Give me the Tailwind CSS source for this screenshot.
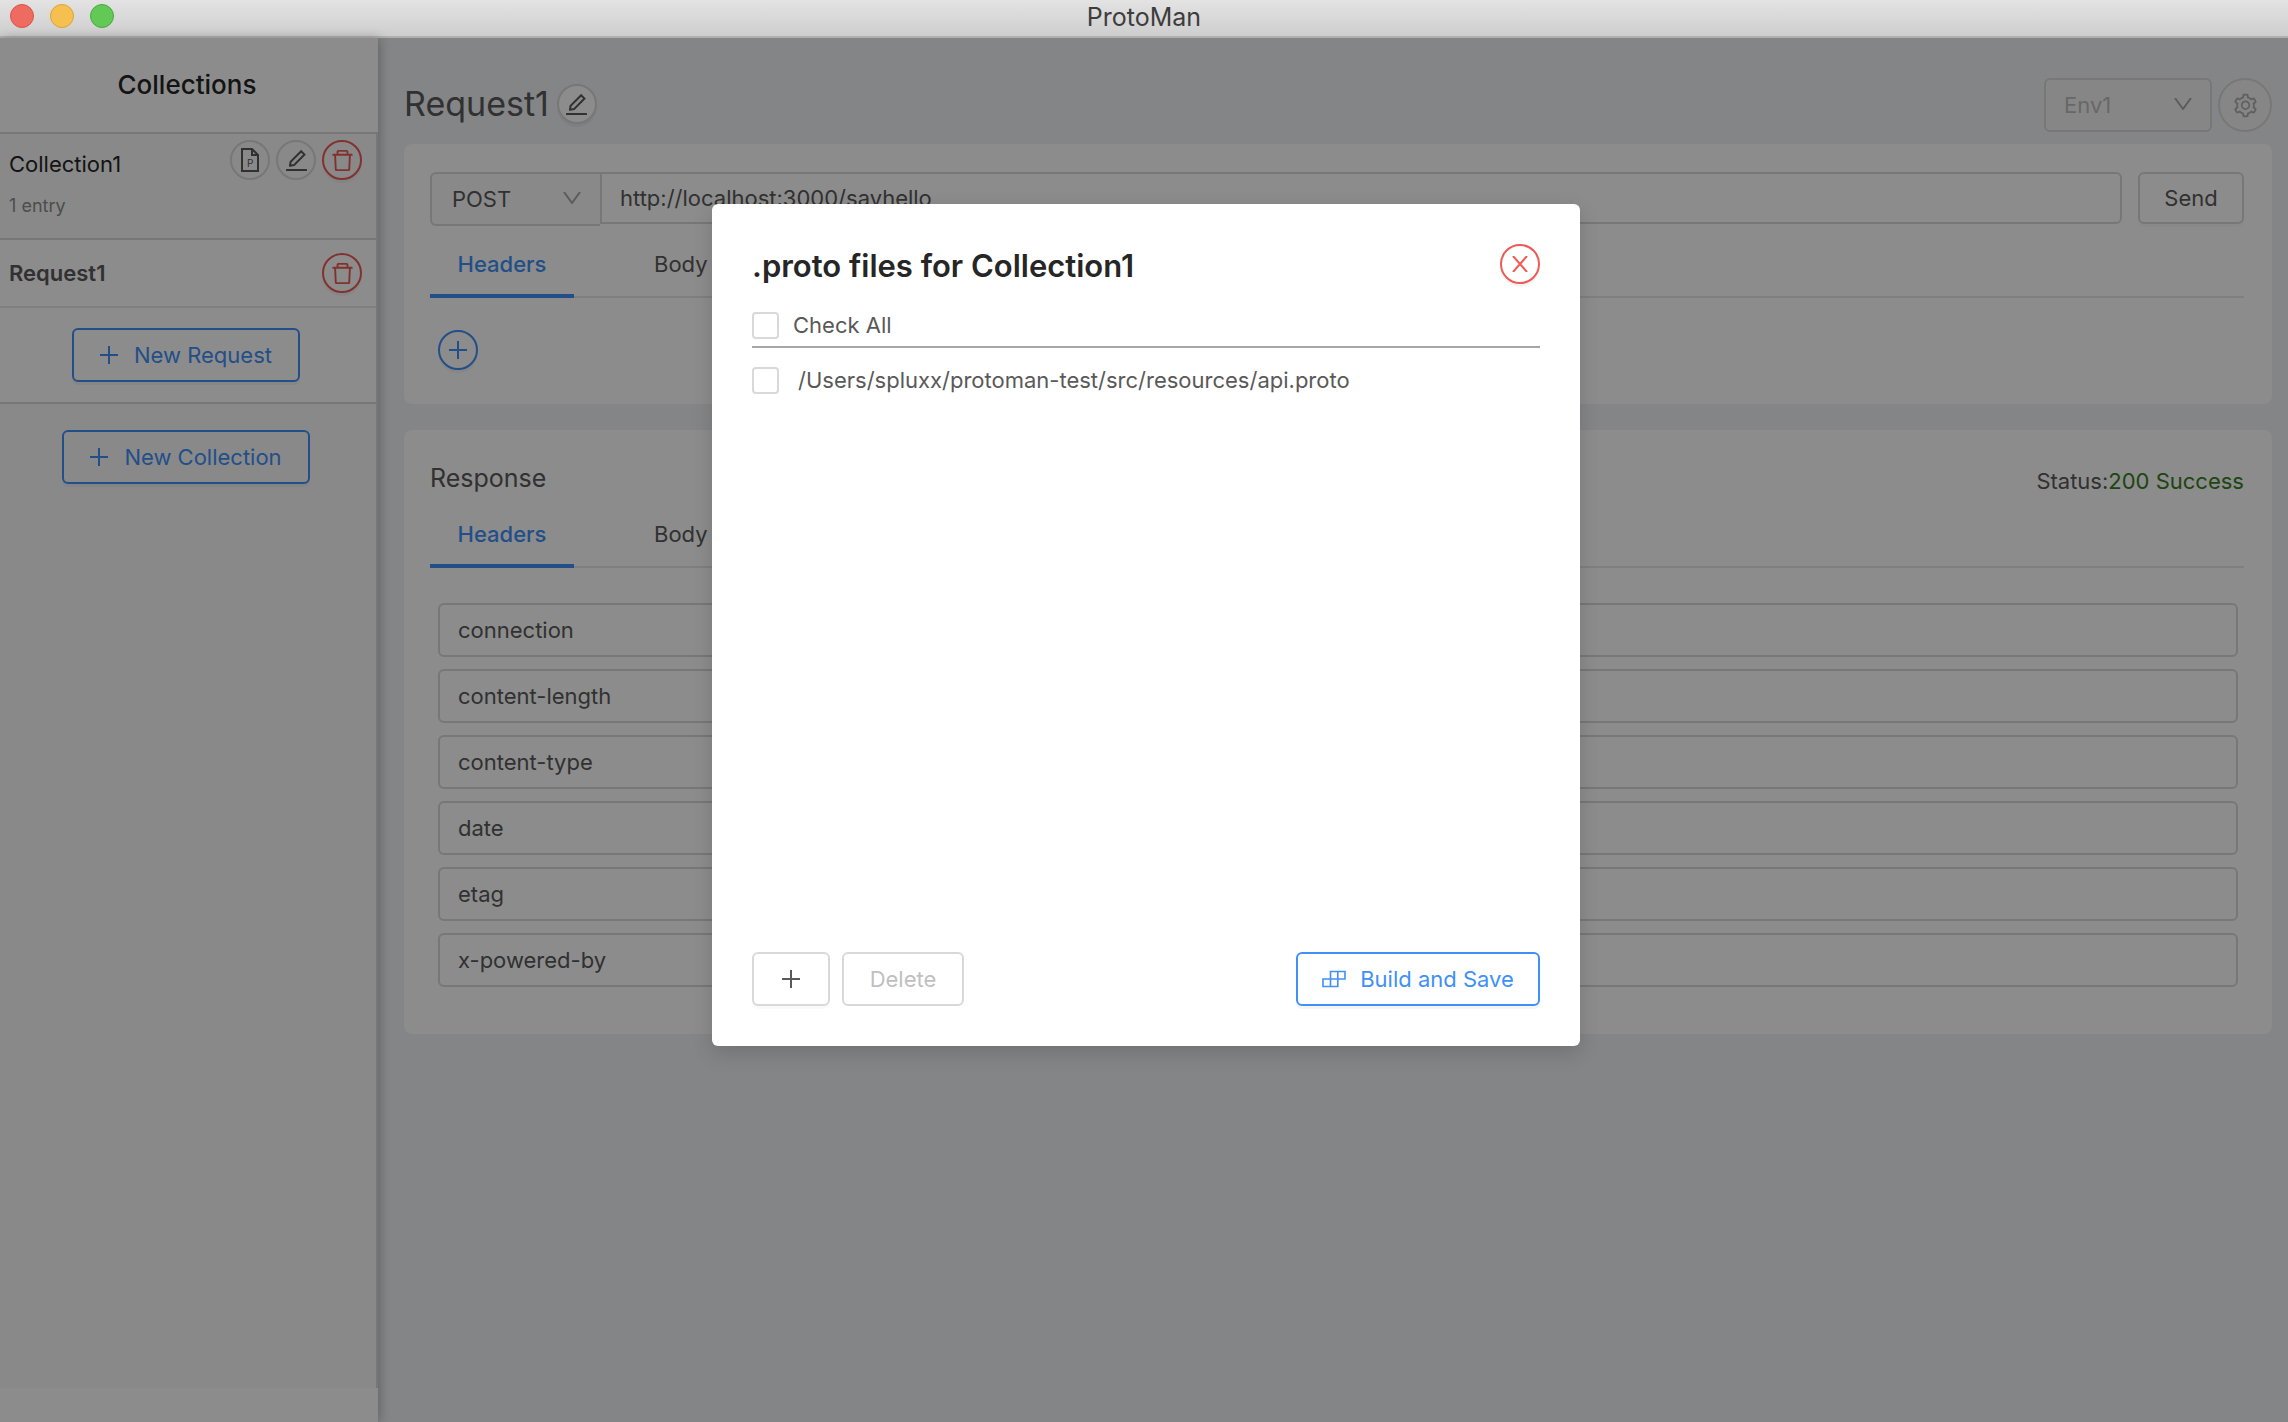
<!DOCTYPE html>
<html lang="en">
<head>
<meta charset="utf-8">
<title>ProtoMan</title>
<script src="https://cdn.jsdelivr.net/npm/@tailwindcss/browser@4"></script>
</head>
<body class="flex h-screen flex-col overflow-hidden bg-[#f0f2f5] font-['Inter',sans-serif] text-[22px] leading-[36px] text-[#595959]">
<svg class="hidden">
  <symbol id="edit" viewBox="0 0 1024 1024"><path fill="currentColor" d="M257.700 752c2 0 4-.2 6-.5L431.900 722c2-.4 3.900-1.300 5.300-2.800l423.900-423.900a9.960 9.960 0 0 0 0-14.100L694.900 114.900c-1.900-1.900-4.400-2.900-7.100-2.900s-5.200 1-7.100 2.900L256.800 538.800c-1.500 1.500-2.400 3.300-2.800 5.300l-29.500 168.200a33.500 33.500 0 0 0 9.400 29.800c6.600 6.400 14.900 9.900 23.800 9.900zm67.400-174.400L687.800 215l73.300 73.300-362.700 362.600-88.900 15.700 15.600-89zM880 836H144c-17.700 0-32 14.300-32 32v36c0 4.400 3.600 8 8 8h784c4.400 0 8-3.600 8-8v-36c0-17.700-14.300-32-32-32z"/></symbol>
  <symbol id="trash" viewBox="0 0 1024 1024"><path fill="currentColor" d="M360 184h-8c4.400 0 8-3.600 8-8v8h304v-8c0 4.400 3.600 8 8 8h-8v72h72v-80c0-35.300-28.700-64-64-64H352c-35.300 0-64 28.700-64 64v80h72v-72zm504 72H160c-17.700 0-32 14.300-32 32v32c0 4.400 3.600 8 8 8h60.400l24.700 523c1.600 34.100 29.800 61 63.900 61h454c34.200 0 62.300-26.800 63.900-61l24.700-523H888c4.400 0 8-3.600 8-8v-32c0-17.700-14.300-32-32-32zM731.300 840H292.700l-24.200-512h487l-24.200 512z"/></symbol>
  <symbol id="gear" viewBox="0 0 1024 1024"><path fill="currentColor" d="M924.8 625.7l-65.5-56c3.1-19 4.7-38.4 4.7-57.8s-1.6-38.8-4.7-57.8l65.5-56a32.03 32.03 0 0 0 9.3-35.2l-.9-2.6a443.74 443.74 0 0 0-79.7-137.9l-1.8-2.1a32.12 32.12 0 0 0-35.1-9.5l-81.3 28.9c-30-24.6-63.5-44-99.7-57.6l-15.7-85a32.05 32.05 0 0 0-25.8-25.7l-2.7-.5c-52.1-9.4-106.9-9.4-159 0l-2.7.5a32.05 32.05 0 0 0-25.8 25.7l-15.8 85.4a351.86 351.86 0 0 0-99 57.4l-81.9-29.1a32 32 0 0 0-35.1 9.5l-1.8 2.1a446.02 446.02 0 0 0-79.7 137.9l-.9 2.6c-4.5 12.5-.8 26.5 9.3 35.2l66.3 56.6c-3.1 18.8-4.6 38-4.6 57.1 0 19.2 1.5 38.4 4.6 57.1L99 625.500a32.030 32.030 0 0 0-9.300 35.200l.9 2.600c18.100 50.400 44.900 96.900 79.700 137.900l1.800 2.100a32.120 32.120 0 0 0 35.100 9.500l81.900-29.100c29.800 24.500 63.100 43.900 99 57.400l15.800 85.400a32.050 32.050 0 0 0 25.800 25.700l2.700.5a449.400 449.400 0 0 0 159 0l2.700-.5a32.050 32.050 0 0 0 25.800-25.700l15.700-85a350 350 0 0 0 99.700-57.600l81.300 28.900a32 32 0 0 0 35.100-9.500l1.800-2.100c34.800-41.100 61.600-87.500 79.700-137.900l.9-2.600c4.500-12.300.8-26.300-9.300-35zM788.300 465.900c2.500 15.100 3.800 30.600 3.800 46.100s-1.300 31-3.800 46.100l-6.600 40.100 74.700 63.900a370.030 370.030 0 0 1-42.600 73.600L721 702.800l-31.400 25.800c-23.900 19.600-50.500 35-79.300 45.800l-38.100 14.300-17.900 97a377.500 377.500 0 0 1-85 0l-17.900-97.200-37.800-14.500c-28.500-10.800-55-26.200-78.700-45.700l-31.400-25.900-93.400 33.200c-17-22.900-31.200-47.600-42.600-73.600l75.500-64.500-6.500-40c-2.400-14.900-3.700-30.300-3.700-45.500 0-15.300 1.200-30.600 3.700-45.500l6.500-40-75.500-64.500c11.300-26.100 25.600-50.700 42.600-73.600l93.400 33.200 31.400-25.900c23.700-19.500 50.200-34.900 78.700-45.700l37.900-14.300 17.900-97.200c28.100-3.200 56.800-3.200 85 0l17.900 97 38.100 14.300c28.700 10.800 55.400 26.200 79.300 45.800l31.400 25.800 92.800-32.900c17 22.900 31.200 47.600 42.600 73.600L781.800 426l6.500 39.900zM512 326c-97.200 0-176 78.800-176 176s78.800 176 176 176 176-78.800 176-176-78.800-176-176-176zm79.200 255.200A111.600 111.600 0 0 1 512 614c-29.900 0-58-11.700-79.200-32.800A111.600 111.600 0 0 1 400 502c0-29.900 11.700-58 32.800-79.200C454 401.600 482.100 390 512 390c29.900 0 58 11.600 79.200 32.800A111.600 111.600 0 0 1 624 502c0 29.900-11.700 58-32.800 79.200z"/></symbol>
  <symbol id="plus" viewBox="0 0 18 18"><path fill="none" stroke="currentColor" stroke-width="2" d="M9 0v18M0 9h18"/></symbol>
  <symbol id="down" viewBox="0 0 18 12"><path fill="none" stroke="currentColor" stroke-width="2" d="M1 0l8 11 8-11"/></symbol>
  <symbol id="cross" viewBox="0 0 16 16"><path fill="none" stroke="currentColor" stroke-width="2" d="M1 0l14 16M15 0L1 16"/></symbol>
  <symbol id="bricks" viewBox="0 0 24 18"><path fill="none" stroke="currentColor" stroke-width="1.600" d="M8.500 1.500h14.500v7.500H8.500zM15.800 1.500v7.500M1 9h14.800v7.500H1zM8.500 9v7.500"/></symbol>
  <symbol id="proto" viewBox="0 0 18 24"><path fill="none" stroke="currentColor" stroke-width="2" d="M1 1h10l6 6v16H1zM11 1v6h6"/><text x="6" y="19" font-size="10" fill="currentColor">P</text></symbol>
</svg>

<header class="relative flex h-[38px] shrink-0 items-center justify-center border-b-2 border-[#b0b0b0] bg-linear-to-b from-[#e3e3e3] to-[#cecece]">
  <div class="absolute left-[10px] top-1 flex gap-4">
    <span class="size-6 rounded-full border border-[#dc5349] bg-[#ed6b60]"></span>
    <span class="size-6 rounded-full border border-[#dba33b] bg-[#f6c050]"></span>
    <span class="size-6 rounded-full border border-[#4fa73d] bg-[#62c856]"></span>
  </div>
  <h1 class="pb-[2px] text-[25px] text-[#3d3d3d]">ProtoMan</h1>
</header>

<div class="relative flex min-h-0 flex-1">
  <aside class="z-[1] flex w-[378px] shrink-0 flex-col bg-white shadow-[2px_0_10px_rgba(0,0,0,0.25)]">
    <h2 class="flex h-[94px] shrink-0 items-center justify-center pr-1 text-[26px] font-medium text-[#262626]">Collections</h2>
    <div class="mb-[34px] flex-1 border-r-2 border-t-2 border-[#d9d9d9] bg-[#fafafa]">
      <section class="flex h-[106px] justify-between border-b-2 border-[#d9d9d9] pl-[9px] pr-[14px] pt-[6px]">
        <div class="pt-[6px]">
          <h3 class="text-[#262626]">Collection1</h3>
          <p class="pt-[6px] text-[18px] text-[#8c8c8c]">1 entry</p>
        </div>
        <div class="flex gap-[6px]">
          <button aria-label="Proto files" class="flex size-10 items-center justify-center rounded-full border-2 border-[#d9d9d9]"><svg class="h-6 w-[18px]"><use href="#proto"/></svg></button>
          <button aria-label="Rename collection" class="flex size-10 items-center justify-center rounded-full border-2 border-[#d9d9d9]"><svg class="size-[27px]"><use href="#edit"/></svg></button>
          <button aria-label="Delete collection" class="flex size-10 items-center justify-center rounded-full border-2 border-[#ec5b56] text-[#ec5b56] shadow-[0_3px_0_rgba(0,0,0,0.04)]"><svg class="size-[27px]"><use href="#trash"/></svg></button>
        </div>
      </section>
      <div class="border-b-2 border-[#d9d9d9] bg-white">
        <div class="flex h-[68px] items-center justify-between border-b-2 border-[#e8e8e8] pl-[9px] pr-[14px]">
          <a href="#" class="font-semibold">Request1</a>
          <button aria-label="Delete request" class="flex size-10 items-center justify-center rounded-full border-2 border-[#ec5b56] text-[#ec5b56] shadow-[0_3px_0_rgba(0,0,0,0.04)]"><svg class="size-[27px]"><use href="#trash"/></svg></button>
        </div>
        <div class="flex h-[94px] items-center justify-center pr-1">
          <button class="flex h-[54px] w-[228px] items-center justify-center gap-4 rounded-md border-2 border-[#4090f7] text-[#4090f7] shadow-[0_3px_0_rgba(0,0,0,0.04)]"><svg class="size-[18px]"><use href="#plus"/></svg>New Request</button>
        </div>
      </div>
      <div class="flex justify-center pr-1 pt-[26px]">
        <button class="flex h-[54px] w-[248px] items-center justify-center gap-4 rounded-md border-2 border-[#4090f7] text-[#4090f7] shadow-[0_3px_0_rgba(0,0,0,0.04)]"><svg class="size-[18px]"><use href="#plus"/></svg>New Collection</button>
      </div>
    </div>
  </aside>

  <main class="flex min-w-0 flex-1 flex-col gap-[26px] pl-[26px] pr-4 pt-10">
    <div>
      <div class="mb-3 flex h-[54px] items-center">
        <h2 class="pb-[2px] text-[34px]">Request1</h2>
        <button aria-label="Rename request" class="mb-[2px] ml-2 flex size-10 items-center justify-center rounded-full border-2 border-[#d9d9d9] bg-white shadow-[0_3px_0_rgba(0,0,0,0.04)]"><svg class="size-[27px]"><use href="#edit"/></svg></button>
        <div class="relative ml-auto">
          <select aria-label="Environment" disabled class="h-[54px] w-[168px] appearance-none rounded-md border-2 border-[#d9d9d9] bg-[#f5f5f5] pl-[18px] text-[#bdbdbd] opacity-100"><option>Env1</option></select>
          <svg class="absolute right-[20px] top-[20px] h-3 w-[18px] text-[#a8a8a8]"><use href="#down"/></svg>
        </div>
        <button aria-label="Environment settings" disabled class="ml-[6px] flex size-[54px] items-center justify-center rounded-full border-2 border-[#d9d9d9] bg-[#f5f5f5] text-[#b0b0b0]"><svg class="size-[27px]"><use href="#gear"/></svg></button>
      </div>
      <section class="h-[260px] rounded-lg bg-white pl-[26px] pr-7 pt-7">
        <div class="flex">
          <div class="relative">
            <select aria-label="Method" class="h-[54px] w-[170px] appearance-none rounded-l-md border-2 border-r-0 border-[#d9d9d9] bg-[#fafafa] pl-5"><option>POST</option></select>
            <svg class="absolute right-[19px] top-[20px] h-3 w-[18px] text-[#a8a8a8]"><use href="#down"/></svg>
          </div>
          <input aria-label="URL" value="http://localhost:3000/sayhello" class="h-[52px] min-w-0 flex-1 rounded-r-md border-2 border-[#d9d9d9] bg-white pl-[18px]">
          <button class="ml-4 h-[52px] w-[106px] rounded-md border-2 border-[#d9d9d9] shadow-[0_3px_0_rgba(0,0,0,0.02)]">Send</button>
        </div>
        <nav class="flex h-[72px] border-b-2 border-[#e8e8e8]">
          <a href="#" class="-mb-[2px] w-[144px] border-b-4 border-[#4090f7] pt-5 text-center font-medium text-[#4090f7]">Headers</a>
          <a href="#" class="ml-[54px] px-[26px] pt-5">Body</a>
        </nav>
        <button aria-label="Add header" class="ml-2 mt-8 flex size-10 items-center justify-center rounded-full border-2 border-[#4090f7] text-[#4090f7] shadow-[0_3px_0_rgba(0,0,0,0.04)]"><svg class="size-[18px]"><use href="#plus"/></svg></button>
      </section>
    </div>
    <section class="h-[604px] rounded-lg bg-white pl-[26px] pr-7 pt-7">
      <div class="flex h-10 items-center justify-between">
        <h3 class="text-[25px]">Response</h3>
        <p class="pt-[6px]">Status:<span class="text-[#377e22]">200 Success</span></p>
      </div>
      <nav class="flex h-[70px] border-b-2 border-[#e8e8e8]">
        <a href="#" class="-mb-[2px] w-[144px] border-b-4 border-[#4090f7] pt-[18px] text-center font-medium text-[#4090f7]">Headers</a>
        <a href="#" class="ml-[54px] px-[26px] pt-[18px]">Body</a>
      </nav>
      <div class="ml-2 mr-[6px] mt-[35px] flex flex-col gap-3">
        <input readonly aria-label="Header 1" value="connection" class="h-[54px] rounded-md border-2 border-[#d9d9d9] pl-[18px]">
        <input readonly aria-label="Header 2" value="content-length" class="h-[54px] rounded-md border-2 border-[#d9d9d9] pl-[18px]">
        <input readonly aria-label="Header 3" value="content-type" class="h-[54px] rounded-md border-2 border-[#d9d9d9] pl-[18px]">
        <input readonly aria-label="Header 4" value="date" class="h-[54px] rounded-md border-2 border-[#d9d9d9] pl-[18px]">
        <input readonly aria-label="Header 5" value="etag" class="h-[54px] rounded-md border-2 border-[#d9d9d9] pl-[18px]">
        <input readonly aria-label="Header 6" value="x-powered-by" class="h-[54px] rounded-md border-2 border-[#d9d9d9] pl-[18px]">
      </div>
    </section>
  </main>

  <div class="absolute inset-0 z-10 flex items-start justify-center bg-black/45 pl-1 pt-[166px]">
    <div role="dialog" aria-labelledby="dialog-title" class="flex h-[842px] w-[868px] flex-col rounded-md bg-white p-10 shadow-[0_7px_20px_rgba(0,0,0,0.15)]">
      <div class="flex h-[60px] items-start justify-between">
        <h2 id="dialog-title" class="pt-1 text-[31px] font-semibold text-[#262626]">.proto files for Collection1</h2>
        <button aria-label="Close" class="flex size-10 items-center justify-center rounded-full border-2 border-[#ec5b56] text-[#ec5b56] shadow-[0_3px_0_rgba(0,0,0,0.04)]"><svg class="size-4"><use href="#cross"/></svg></button>
      </div>
      <div class="flex h-[44px] items-center border-b-2 border-[#a6a6a6]">
        <label class="flex items-center gap-[14px]"><input type="checkbox" class="size-[27px] appearance-none rounded-sm border-2 border-[#d9d9d9]">Check All</label>
      </div>
      <label class="mt-[14px] flex items-center gap-[19px]"><input type="checkbox" class="size-[27px] appearance-none rounded-sm border-2 border-[#d9d9d9]">/Users/spluxx/protoman-test/src/resources/api.proto</label>
      <div class="mt-auto flex">
        <button aria-label="Add file" class="flex h-[54px] w-[78px] items-center justify-center rounded-md border-2 border-[#d9d9d9] shadow-[0_3px_0_rgba(0,0,0,0.02)]"><svg class="size-[18px]"><use href="#plus"/></svg></button>
        <button disabled class="ml-3 h-[54px] w-[122px] rounded-md border-2 border-[#d9d9d9] text-[#bfbfbf]">Delete</button>
        <button class="ml-auto flex h-[54px] w-[244px] items-center justify-center gap-[14px] rounded-md border-2 border-[#4090f7] text-[#4090f7] shadow-[0_3px_0_rgba(0,0,0,0.04)]"><svg class="h-[18px] w-6"><use href="#bricks"/></svg>Build and Save</button>
      </div>
    </div>
  </div>
</div>
</body>
</html>
